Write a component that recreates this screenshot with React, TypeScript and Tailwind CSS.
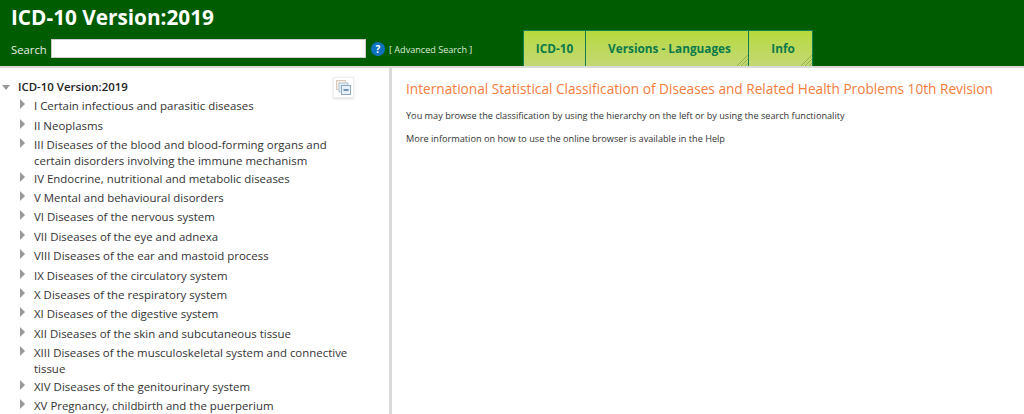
import React from 'react'

const chapters = [
  'I Certain infectious and parasitic diseases',
  'II Neoplasms',
  'III Diseases of the blood and blood-forming organs and certain disorders involving the immune mechanism',
  'IV Endocrine, nutritional and metabolic diseases',
  'V Mental and behavioural disorders',
  'VI Diseases of the nervous system',
  'VII Diseases of the eye and adnexa',
  'VIII Diseases of the ear and mastoid process',
  'IX Diseases of the circulatory system',
  'X Diseases of the respiratory system',
  'XI Diseases of the digestive system',
  'XII Diseases of the skin and subcutaneous tissue',
  'XIII Diseases of the musculoskeletal system and connective tissue',
  'XIV Diseases of the genitourinary system',
  'XV Pregnancy, childbirth and the puerperium',
]

const Grip = () => (
  <svg className="absolute right-0 bottom-0" width="11" height="11" viewBox="0 0 11 11">
    <path d="M0 11L11 0M4 11L11 4M8 11L11 8" stroke="#8fb04a" strokeWidth="1" />
  </svg>
)

const Tab = ({ label, width, grip }: { label: string; width: string; grip?: boolean }) => (
  <div className={`relative flex items-center justify-center h-[36px] ${width} border-t border-r border-[#0f7f4f] bg-gradient-to-b from-[#b6d93a] to-[#c4d873] text-[11.8px] font-bold text-[#0b7a4b]`}>
    <span className={grip ? 'pt-[1px] pl-[5px]' : 'pt-[1px]'}>{label}</span>
    {grip && <Grip />}
  </div>
)

const CollapseIcon = () => (
  <svg width="17" height="17" viewBox="0 0 17 17">
    <rect x="1.5" y="1.5" width="9" height="9" fill="#f6eee4" stroke="#d8cabb" />
    <rect x="4" y="4" width="9" height="9" fill="#e4ecf3" stroke="#b3c5d5" />
    <rect x="6.5" y="6.5" width="9" height="9" fill="#e8eff6" stroke="#8ba8c2" />
    <rect x="8.5" y="10" width="5" height="2" fill="#6d92b4" />
  </svg>
)

export default function App() {
  return (
    <div className="h-[414px] w-[1024px] overflow-hidden bg-white font-['Open_Sans','Noto_Sans',sans-serif]">
      {/* HEADER */}
      <div className="h-[66px] bg-[#005c00] flex flex-col">
        <h1 className="pl-[11px] pt-[2px] h-[38px] text-[20.75px] leading-[30px] font-bold text-white">ICD-10 Version:2019</h1>
        <div className="flex items-start">
          <span className="ml-[11px] mt-[3px] w-[40px] text-[11.3px] leading-[18px] text-[#e6f2e6]">Search</span>
          <input className="mt-[1px] h-[19px] w-[315px] bg-white border border-[#cccccc]" />
          <span className="ml-[5px] mt-[4px] flex h-[14px] w-[14px] items-center justify-center rounded-full bg-[#0f72c0] text-[10px] font-bold leading-none text-white">?</span>
          <span className="ml-[4px] mt-[4px] w-[134px] text-[9.1px] leading-[15px] text-[#dcecdc]">[ Advanced Search ]</span>
          <div className="flex border-l border-[#0f7f4f] -mt-[8px]">
            <Tab label="ICD-10" width="w-[62px]" />
            <Tab label="Versions - Languages" width="w-[163px]" grip />
            <Tab label="Info" width="w-[64px]" grip />
          </div>
        </div>
      </div>

      <div className="flex h-[348px] border-t-2 border-[#d9d9d9]">
        {/* TREE */}
        <div className="relative w-[389px] shrink-0 pt-[11px] text-[11.45px] leading-[16px] text-[#333333]">
          <div className="flex items-center h-[16px] mb-[3.4px]">
            <span className="ml-[2px] h-0 w-0 border-x-[4px] border-t-[5px] border-x-transparent border-t-[#999999]" />
            <span className="ml-[8px] font-semibold text-[#222222]">ICD-10 Version:2019</span>
          </div>
          <div className="absolute right-[35px] top-[9px] flex h-[21px] w-[21px] items-center justify-center border border-[#eeeeee] shadow-sm">
            <CollapseIcon />
          </div>
          {chapters.map((c) => (
            <div key={c} className="flex min-h-[19.4px] pb-[1.5px]">
              <span className="ml-[20px] mt-[1px] h-0 w-0 border-y-[5px] border-l-[5px] border-y-transparent border-l-[#999999]" />
              <span className="ml-[9px] w-[325px]">{c}</span>
            </div>
          ))}
        </div>

        {/* CONTENT */}
        <div className="flex-1 border-l-[3px] border-[#d9d9d9] pl-[14px] pt-[11px]">
          <h2 className="text-[13.67px] leading-[20px] text-[#f47c3c]">International Statistical Classification of Diseases and Related Health Problems 10th Revision</h2>
          <p className="mt-[10px] text-[9.17px] leading-[14px] text-[#333333]">You may browse the classification by using the hierarchy on the left or by using the search functionality</p>
          <p className="mt-[9px] text-[9.17px] leading-[14px] text-[#333333]">More information on how to use the online browser is available in the Help</p>
        </div>
      </div>
    </div>
  )
}
